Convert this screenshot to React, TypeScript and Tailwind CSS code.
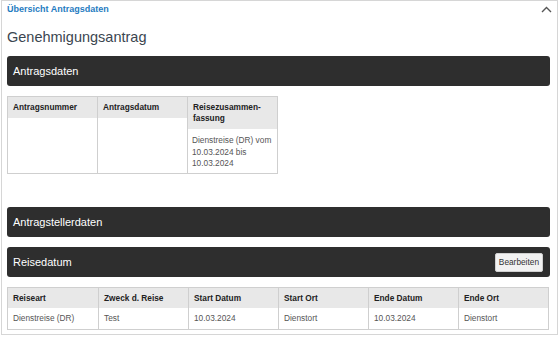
const font = { fontFamily: '"Liberation Sans", Arial, sans-serif' };

const Bar = ({ title, action }: { title: string; action?: string }) => (
  <div className="h-[30px] rounded-[3px] bg-[#2e2e2e] flex items-center justify-between pl-[6px] pr-[7px]">
    <span className="text-white text-[11px] leading-[13px]">{title}</span>
    {action && (
      <button className="h-[19px] px-[3px] bg-[#f2f2f2] border border-[#d0d0d0] rounded-[2px] text-[8.3px] text-[#333]">
        {action}
      </button>
    )}
  </div>
);

export default function App() {
  const summary = [
    { head: "Antragsnummer", body: [] as string[] },
    { head: "Antragsdatum", body: [] as string[] },
    {
      head: "Reisezusammen-\nfassung",
      body: ["Dienstreise (DR) vom", "10.03.2024 bis", "10.03.2024"],
    },
  ];

  const travel = [
    ["Reiseart", "Dienstreise (DR)"],
    ["Zweck d. Reise", "Test"],
    ["Start Datum", "10.03.2024"],
    ["Start Ort", "Dienstort"],
    ["Ende Datum", "10.03.2024"],
    ["Ende Ort", "Dienstort"],
  ];

  return (
    <div className="w-[560px] h-[337px] bg-white" style={font}>
      <div className="ml-[1px] w-[557px] h-[335px] border border-[#d6d6d6] pl-[5px] pr-[7px] pt-[2px]">
        <div className="flex items-start justify-between">
          <span className="text-[9px] leading-[12px] font-bold text-[#1f7cc1]">
            Übersicht Antragsdaten
          </span>
          <svg width="11" height="7" viewBox="0 0 11 7" className="mt-[3px] mr-[-2px]">
            <path d="M1 6 L5.5 1.5 L10 6" fill="none" stroke="#555" strokeWidth="1.4" />
          </svg>
        </div>

        <h1 className="mt-[14px] text-[14.5px] leading-[17px] text-[#3b4650]">Genehmigungsantrag</h1>

        <div className="mt-[10px]">
          <Bar title="Antragsdaten" />
        </div>

        <div className="mt-[10px] flex w-[271px] border border-[#cfcfcf] h-[78px]">
          {summary.map((col, i) => (
            <div key={i} className={`flex-1 flex flex-col ${i > 0 ? "border-l border-[#cfcfcf]" : ""}`}>
              <div className="bg-[#e8e8e8] px-[5px] py-[5px] text-[8.3px] leading-[11px] font-bold text-[#222] whitespace-pre-line">
                {col.head}
              </div>
              <div className="px-[4px] pt-[6px] text-[8.3px] leading-[11.7px] text-[#555] whitespace-nowrap">
                {col.body.map((l) => (
                  <div key={l}>{l}</div>
                ))}
              </div>
            </div>
          ))}
        </div>

        <div className="mt-[33px]">
          <Bar title="Antragstellerdaten" />
        </div>
        <div className="mt-[10px]">
          <Bar title="Reisedatum" action="Bearbeiten" />
        </div>

        <div className="mt-[10px] grid grid-cols-6 border border-[#cfcfcf] w-[542px]">
          {travel.map(([h], i) => (
            <div
              key={h}
              className={`bg-[#e8e8e8] h-[20px] flex items-center px-[5px] text-[8.3px] font-bold text-[#222] ${i > 0 ? "border-l border-[#cfcfcf]" : ""}`}
            >
              {h}
            </div>
          ))}
          {travel.map(([h, v], i) => (
            <div
              key={h + "v"}
              className={`h-[21px] flex items-center px-[5px] text-[8.3px] text-[#555] ${i > 0 ? "border-l border-[#cfcfcf]" : ""}`}
            >
              {v}
            </div>
          ))}
        </div>
      </div>
    </div>
  );
}
